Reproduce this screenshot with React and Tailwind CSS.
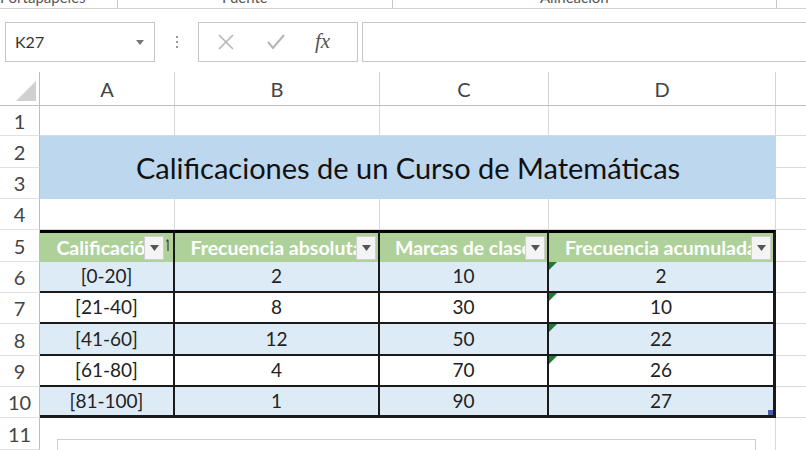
const font = { fontFamily: 'Lato, "Open Sans", sans-serif' }

const data = [
  ['[0-20]', 2, 10, 2],
  ['[21-40]', 8, 30, 10],
  ['[41-60]', 12, 50, 22],
  ['[61-80]', 4, 70, 26],
  ['[81-100]', 1, 90, 27],
]

const FilterBtn = ({ sort }) => (
  <div className="absolute right-[2px] top-[3px] flex items-center">
    <div className="w-[20px] h-[24px] bg-[#f4f4f4] border border-[#cfcfcf] flex items-center justify-center">
      <svg width="9" height="6" viewBox="0 0 9 6"><path d="M0 0h9L4.5 6z" fill="#555" /></svg>
    </div>
    {sort && (
      <svg width="6" height="14" viewBox="0 0 6 14" className="ml-[1px] mb-[6px]">
        <path d="M3 13V2M1.5 3.5L3 1.5" stroke="#333" strokeWidth="1.1" fill="none" />
      </svg>
    )}
  </div>
)

const RowHead = ({ n }) => (
  <div className="flex items-center justify-center text-[20px] text-[#444] border-r border-r-[#bdbdbd] border-b border-b-[#e1e1e1]">{n}</div>
)

const Grid = ({ last }) => (
  <div className={`border-b border-b-[#d9d9d9] ${last ? '' : 'border-r border-r-[#d9d9d9]'}`} />
)

export default function App() {
  return (
    <div className="w-[806px] h-[450px] overflow-hidden bg-white" style={font}>
      {/* ribbon group labels, cut off at the top */}
      <div className="h-[9px] overflow-hidden border-b border-b-[#d2d2d2] flex text-[15px] text-[#555] leading-[18px]">
        <div className="w-[118px] -mt-[12px] border-r border-r-[#c9c9c9]">Portapapeles</div>
        <div className="w-[275px] -mt-[12px] border-r border-r-[#c9c9c9] pl-[104px]">Fuente</div>
        <div className="w-[384px] -mt-[12px] border-r border-r-[#c9c9c9] pl-[147px]">Alineación</div>
      </div>

      {/* formula bar */}
      <div className="flex items-stretch h-[40px] mt-[13px]">
        <div className="ml-[5px] w-[150px] border border-[#c6c6c6] flex items-center justify-between pl-[9px] pr-[10px]">
          <span className="text-[16px] text-[#333]">K27</span>
          <svg width="8" height="5" viewBox="0 0 8 5"><path d="M0 0h8L4 5z" fill="#777" /></svg>
        </div>
        <div className="w-[43px] flex flex-col items-center justify-center gap-[3px]">
          <span className="w-[2px] h-[2px] bg-[#999]" />
          <span className="w-[2px] h-[2px] bg-[#999]" />
          <span className="w-[2px] h-[2px] bg-[#999]" />
        </div>
        <div className="w-[160px] border border-[#c6c6c6] flex items-center pl-[18px] gap-[31px]">
          <svg width="18" height="18" viewBox="0 0 18 18"><path d="M2 2l14 14M16 2L2 16" stroke="#b5b5b5" strokeWidth="1.6" /></svg>
          <svg width="20" height="18" viewBox="0 0 20 18"><path d="M2 9l5 6L18 2" stroke="#b5b5b5" strokeWidth="2" fill="none" /></svg>
          <span className="text-[21px] italic text-[#555] -ml-[2px]" style={{ fontFamily: '"Liberation Serif", serif' }}>fx</span>
        </div>
        <div className="flex-1 ml-[4px] border border-[#c6c6c6] border-r-0" />
      </div>

      {/* sheet */}
      <div className="mt-[10px] grid grid-cols-[40px_135px_205px_169px_227px_1fr] grid-rows-[34px_30px_32px_31px_31px_32px_31px_31px_32px_31px_31px_32px]">
        {/* column headers */}
        <div className="flex items-end justify-end pr-[3px] pb-[4px] border-r border-r-[#bdbdbd] border-b border-b-[#bdbdbd]">
          <svg width="20" height="20" viewBox="0 0 20 20"><path d="M20 0v20H0z" fill="#d0d0d0" /></svg>
        </div>
        {['A', 'B', 'C', 'D'].map(c => (
          <div key={c} className="flex items-center justify-center text-[20px] text-[#444] border-r border-r-[#d4d4d4] border-b border-b-[#bdbdbd]">{c}</div>
        ))}
        <div className="border-b border-b-[#bdbdbd]" />

        {/* row 1 */}
        <RowHead n={1} />
        <Grid /><Grid /><Grid /><Grid /><Grid last />

        {/* rows 2-3 title */}
        <RowHead n={2} />
        <div className="col-span-4 row-span-2 bg-[#bdd7ee] flex items-center justify-center text-[29px] text-[#111]">
          Calificaciones de un Curso de Matemáticas
        </div>
        <Grid last />
        <RowHead n={3} />
        <Grid last />

        {/* row 4 */}
        <RowHead n={4} />
        <Grid /><Grid /><Grid /><Grid /><Grid last />

        {/* row 5 table header */}
        <RowHead n={5} />
        {[
          ['Calificación', true],
          ['Frecuencia absoluta'],
          ['Marcas de clase'],
          ['Frecuencia acumulada'],
        ].map(([t, sort], i) => (
          <div key={t} className={`relative bg-[#aed19a] border-t-[3px] border-t-black border-r-2 border-r-[#1a1a1a] ${i === 3 ? 'border-r-[3px]' : ''} flex items-center justify-center overflow-hidden`}>
            <span className="whitespace-nowrap text-white font-bold text-[19.5px]">{t}</span>
            <FilterBtn sort={sort} />
          </div>
        ))}
        <Grid last />

        {/* rows 6-10 data */}
        {data.map((row, r) => (
          <div key={r} className="contents">
            <RowHead n={r + 6} />
            {row.map((v, i) => (
              <div
                key={i}
                className={`relative flex items-center justify-center text-[19px] text-[#222] border-b-2 border-b-[#1a1a1a] ${r === 4 ? 'border-b-[3px]' : ''} border-r-2 border-r-[#1a1a1a] ${i === 3 ? 'border-r-[3px]' : ''} ${r % 2 === 0 ? 'bg-[#ddebf7]' : 'bg-white'}`}
              >
                {v}
                {i === 3 && r < 4 && (
                  <svg width="8" height="8" viewBox="0 0 8 8" className="absolute left-0 top-0"><path d="M0 0h8L0 8z" fill="#1e7b34" /></svg>
                )}
                {i === 3 && r === 4 && (
                  <span className="absolute right-0 bottom-0 w-[5px] h-[5px] bg-[#4a5bb0]" />
                )}
              </div>
            ))}
            <Grid last />
          </div>
        ))}

        {/* row 11 */}
        <RowHead n={11} />
        <div className="col-span-4 relative border-r border-r-[#d9d9d9]">
          <div className="absolute left-[17px] top-[21px] w-[699px] h-[40px] border border-[#cfcfcf] bg-white" />
        </div>
        <div />
      </div>
    </div>
  )
}
